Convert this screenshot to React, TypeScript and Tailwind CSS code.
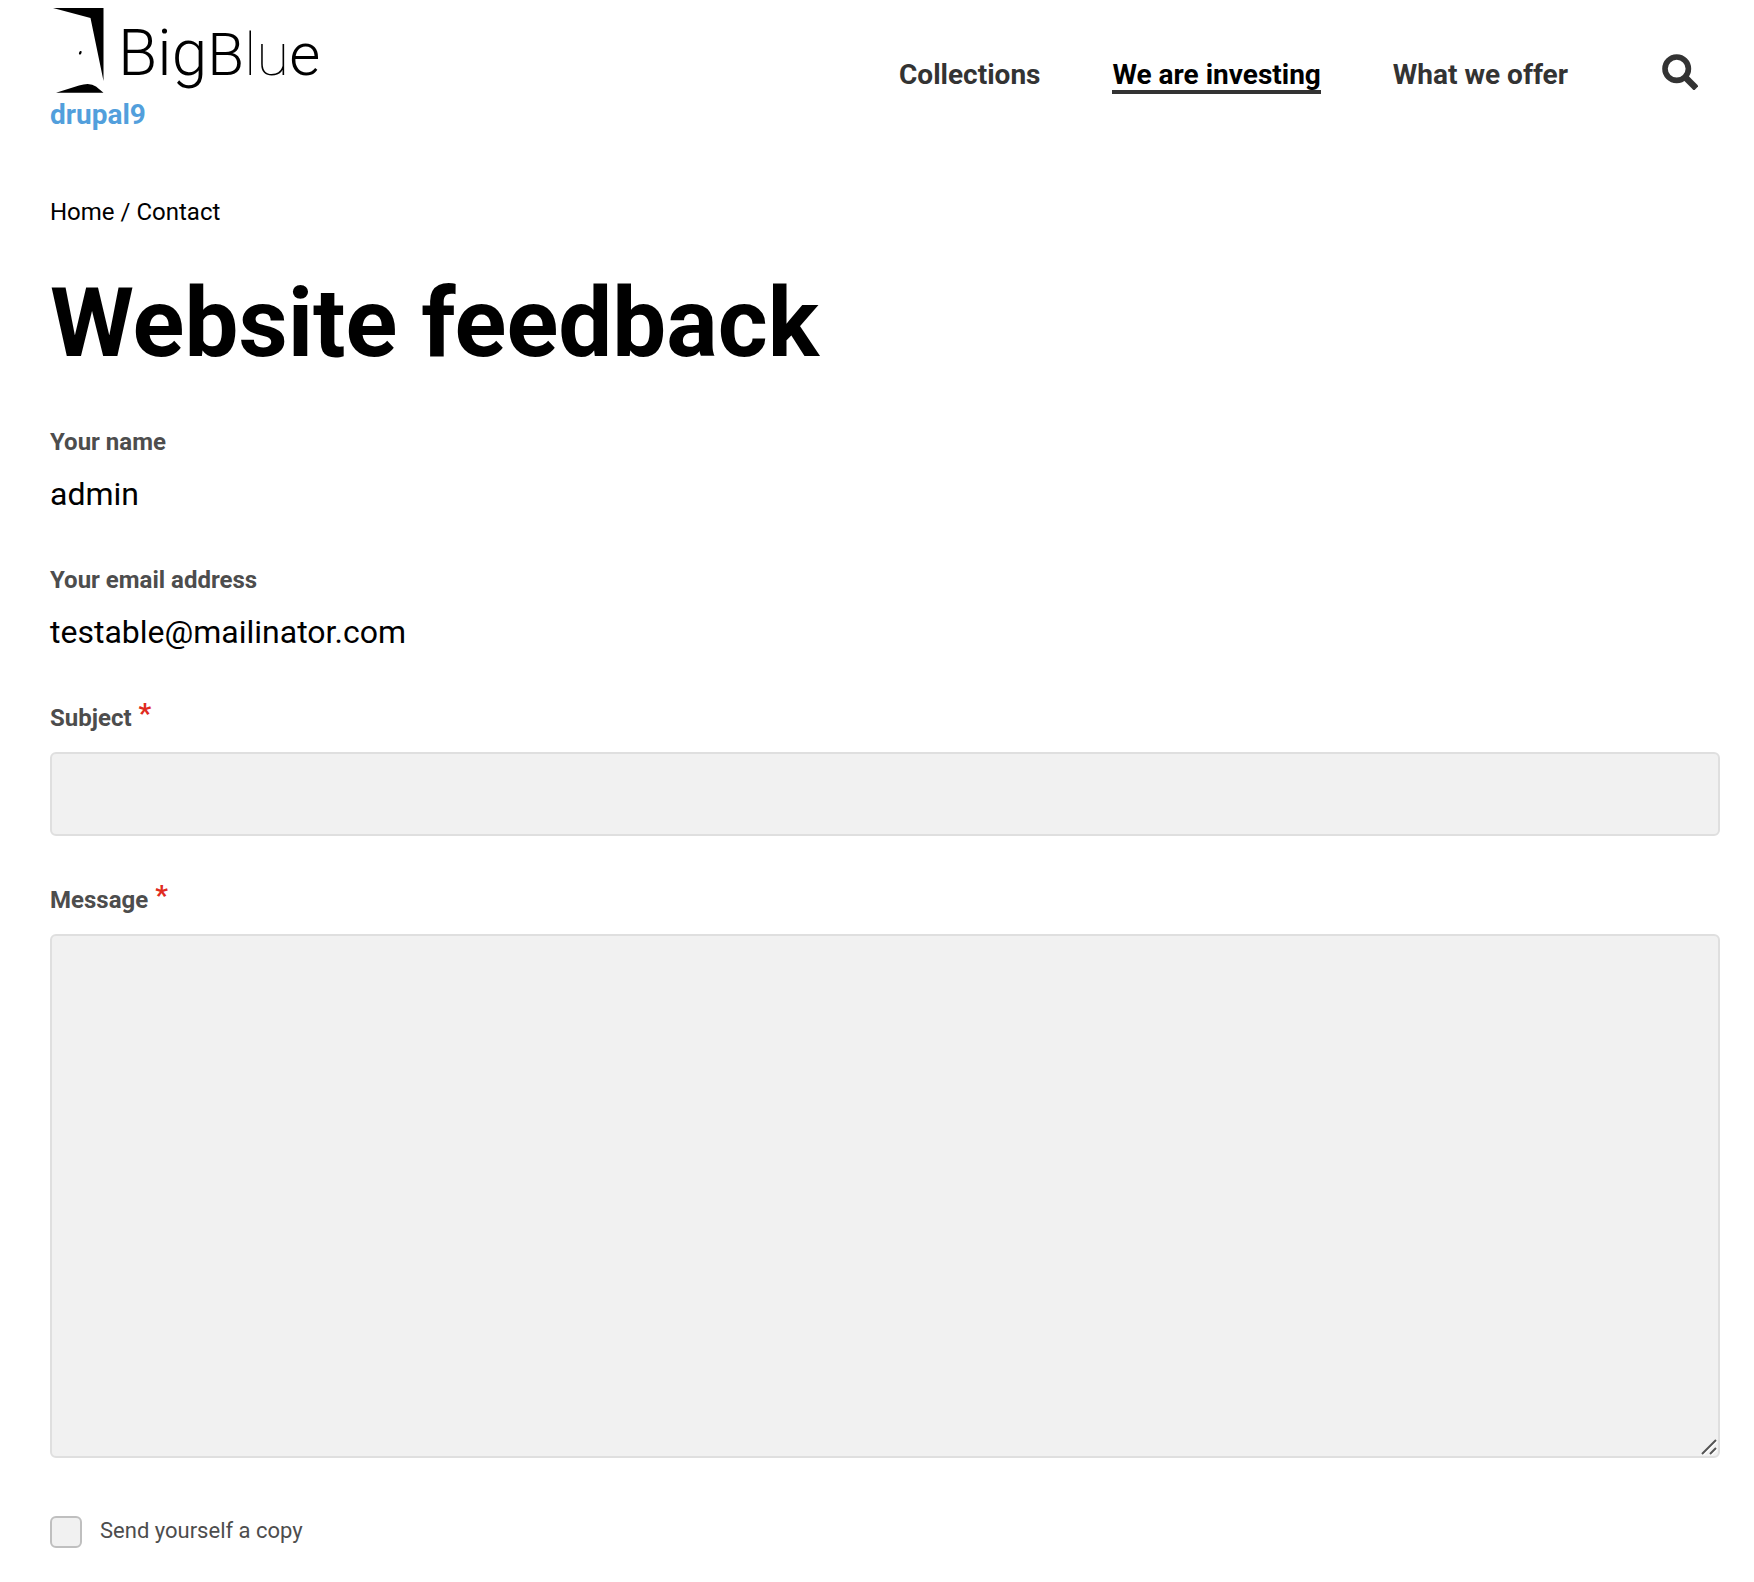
import React from 'react';

const NAV = [
  { label: 'Collections', active: false },
  { label: 'We are investing', active: true },
  { label: 'What we offer', active: false },
];

function LogoMark() {
  return (
    <svg viewBox="0 0 54 86" className="h-[86px] w-[54px] shrink-0" aria-hidden="true">
      <path d="M3 0H53.500V73L40.500 10Z" />
      <path d="M6 84.800L29 77.500Q40 74 46 78.500L53.500 84.800Z" />
      <ellipse cx="30.300" cy="44.800" rx="1.200" ry="1.900" transform="rotate(25 30.300 44.800)" />
    </svg>
  );
}

function SearchIcon() {
  return (
    <svg viewBox="0 0 36 36" className="size-9" fill="none" stroke="currentColor" aria-hidden="true">
      <circle cx="14.700" cy="14.700" r="11.700" strokeWidth="5.600" />
      <path d="M23 23L34.300 34.300" strokeWidth="6.500" />
    </svg>
  );
}

function Item({ label, value }: { label: string; value: string }) {
  return (
    <div className="mb-[46px]">
      <dt className="text-2xl leading-8 font-bold text-[#4d4d4d]">{label}</dt>
      <dd className="mt-3 text-[32px] leading-[48px]">{value}</dd>
    </div>
  );
}

function RequiredLabel({ id, children }: { id: string; children: string }) {
  return (
    <label htmlFor={id} className="mb-[18px] flex h-8 gap-[7px] text-2xl leading-8 font-bold text-[#4d4d4d]">
      {children}
      <span className="-mt-1 text-[28px] font-bold text-[#e02b20]">*</span>
    </label>
  );
}

export default function App() {
  return (
    <div className="min-h-screen bg-white pr-[34px] pb-[34px] pl-[50px] font-[Roboto,sans-serif] text-black">
      <header className="flex items-start justify-between pt-2">
        <div>
          <a href="#" aria-label="BigBlue" className="flex gap-[14px]">
            <LogoMark />
            <span className="h-[86px] text-[64px] leading-[92px] font-light">
              Big
              <span className="text-[60px]">
                B<span className="font-thin">lu</span>e
              </span>
            </span>
          </a>
          <a href="#" className="block text-[28px] leading-[42px] font-bold text-[#529fdc]">drupal9</a>
        </div>
        <nav className="mt-11 mr-[22px] flex items-start text-[28px] leading-[30px] font-bold text-[#333]">
          <ul className="flex gap-[72px] pt-2">
            {NAV.map((n) => (
              <li key={n.label}>
                <a
                  href="#"
                  className={n.active ? 'block border-b-4 border-[#333] text-black' : 'block'}
                >
                  {n.label}
                </a>
              </li>
            ))}
          </ul>
          <button type="button" aria-label="Search" className="ml-[94px] mt-[2px]">
            <SearchIcon />
          </button>
        </nav>
      </header>

      <main>
        <nav aria-label="Breadcrumb" className="mt-[60px] text-2xl leading-8">
          <a href="#">Home</a> / <a href="#">Contact</a>
        </nav>
        <h1 className="mt-[39px] text-8xl leading-[112px] font-bold">Website feedback</h1>

        <form className="mt-[47px]">
          <dl>
            <Item label="Your name" value="admin" />
            <Item label="Your email address" value="testable@mailinator.com" />
          </dl>
          <div className="mb-12">
            <RequiredLabel id="subject">Subject</RequiredLabel>
            <input
              id="subject"
              type="text"
              required
              className="block h-[84px] w-full rounded-md border-2 border-[#dfdfdf] bg-[#f1f1f1] px-6 text-[32px] shadow-none"
            />
          </div>
          <div>
            <RequiredLabel id="message">Message</RequiredLabel>
            <div className="relative">
              <textarea
                id="message"
                required
                className="block h-[524px] w-full resize-none rounded-md border-2 border-[#dfdfdf] bg-[#f1f1f1] p-6 text-[32px] shadow-none"
              />
              <svg viewBox="0 0 16 16" className="pointer-events-none absolute right-[3px] bottom-[3px] size-4" fill="none" aria-hidden="true">
                <path d="M2 16L16 2M10 16L16 10" stroke="#fff" strokeWidth="2" />
                <path d="M1 15L15 1M9 15L15 9" stroke="#555" strokeWidth="2" />
              </svg>
            </div>
          </div>
          <div className="mt-[58px] flex items-center gap-[18px]">
            <input
              id="copy"
              type="checkbox"
              className="size-8 appearance-none rounded-md border-2 border-[#bfbfbf] bg-[#f1f1f1] checked:bg-[#529fdc]"
            />
            <label htmlFor="copy" className="-mt-0.5 text-[22px] leading-8 text-[#4d4d4d]">
              Send yourself a copy
            </label>
          </div>
        </form>
      </main>
    </div>
  );
}
